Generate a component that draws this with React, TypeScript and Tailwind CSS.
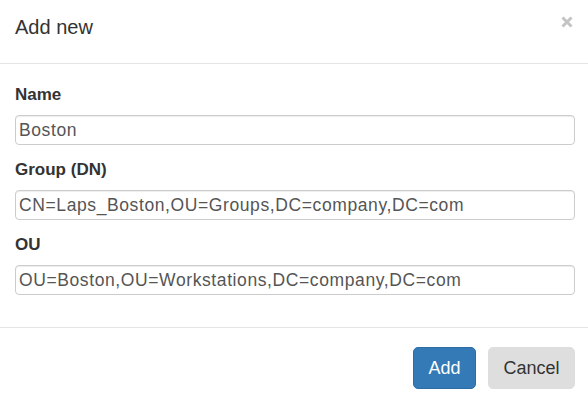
import React, { useState } from 'react';

interface Field {
  id: string;
  label: string;
  value: string;
}

const initialFields: Field[] = [
  { id: 'name', label: 'Name', value: 'Boston' },
  { id: 'group', label: 'Group (DN)', value: 'CN=Laps_Boston,OU=Groups,DC=company,DC=com' },
  { id: 'ou', label: 'OU', value: 'OU=Boston,OU=Workstations,DC=company,DC=com' }
];

const App: React.FC = () => {
  const [fields, setFields] = useState<Field[]>(initialFields);

  const update = (id: string, value: string) => {
    setFields(prev => prev.map(f => (f.id === id ? { ...f, value } : f)));
  };

  return (
    <div className="w-[588px] h-[402px] overflow-hidden bg-white text-[#333] font-['Liberation_Sans',Arial,sans-serif]">
      <header className="h-[64px] border-b border-[#e5e5e5] pl-[15px] pr-[15px] pt-[16px] flex justify-between items-start">
        <h4 className="text-[20px] leading-[22px] font-normal">Add new</h4>
        <button className="w-[12px] h-[12px] flex items-center justify-center" aria-label="Close">
          <svg width="12" height="12" viewBox="0 0 12 12">
            <path d="M1.5 1.5 L10.5 10.5 M10.5 1.5 L1.5 10.5" stroke="#c4c4c4" strokeWidth="3" />
          </svg>
        </button>
      </header>

      <section className="pl-[15px] pr-[13px] pt-[19px] pb-[19px]">
        {fields.map(field => (
          <div key={field.id} className="mb-[13px]">
            <label htmlFor={field.id} className="block text-[17px] leading-[24px] font-bold mb-[8px]">
              {field.label}
            </label>
            <input
              id={field.id}
              type="text"
              value={field.value}
              onChange={e => update(field.id, e.target.value)}
              className="block w-full h-[30px] px-[3px] text-[17.5px] tracking-[0.6px] text-[#555] bg-white border border-[#cccccc] rounded-[4px] shadow-[inset_0_1px_1px_rgba(0,0,0,0.075)] outline-none"
            />
          </div>
        ))}
      </section>

      <footer className="border-t border-[#e5e5e5] pl-[15px] pr-[13px] pt-[19px] flex justify-end gap-[12px]">
        <button className="w-[63px] h-[42px] text-[18px] text-white bg-[#337ab7] border border-[#2e6da4] rounded-[5px]">
          Add
        </button>
        <button className="w-[87px] h-[42px] text-[18px] text-[#333] bg-[#dedede] border border-[#dedede] rounded-[5px]">
          Cancel
        </button>
      </footer>
    </div>
  );
};

export default App;
